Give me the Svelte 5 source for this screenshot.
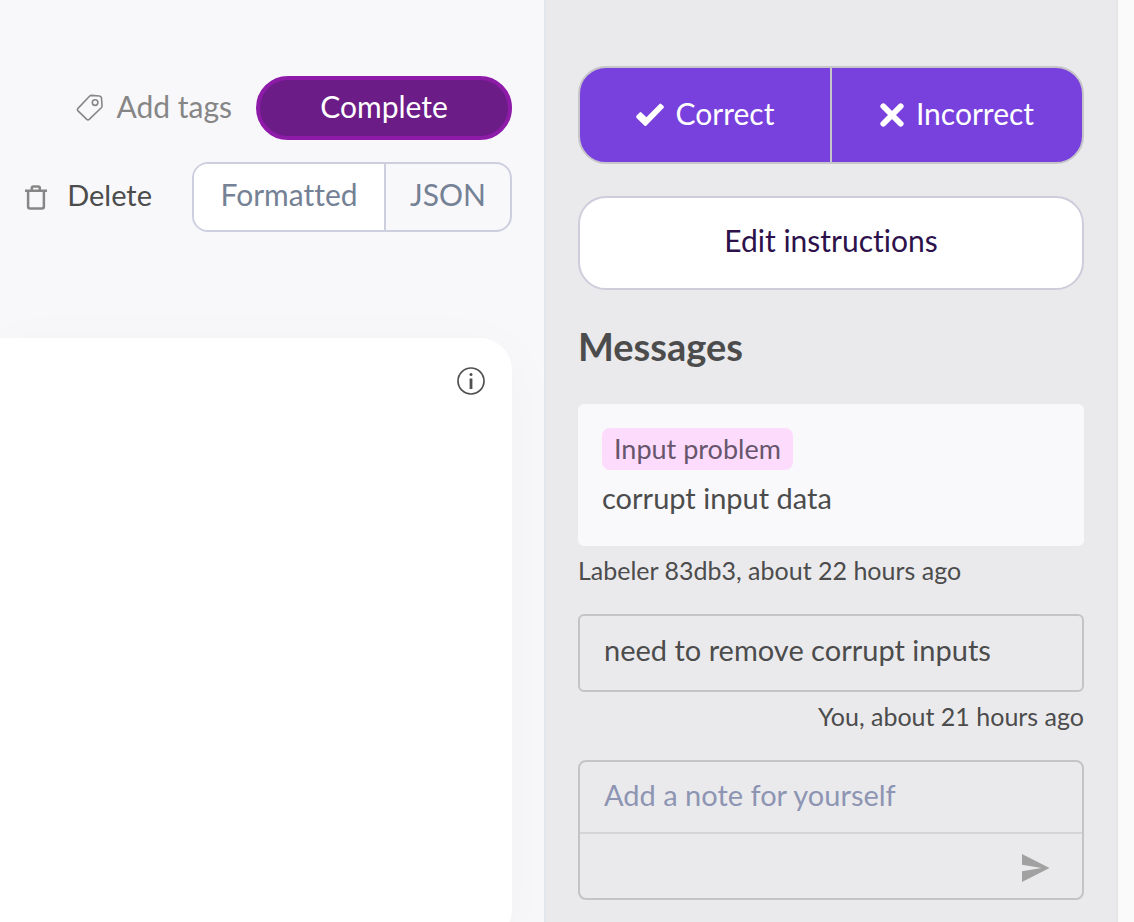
<script lang="ts">
  let view = $state('formatted');
  let note = $state('');
  const views = [
    { id: 'formatted', label: 'Formatted' },
    { id: 'json', label: 'JSON' }
  ];
</script>

<div class="page">
  <main class="workspace">
    <header class="toolbar">
      <div class="row">
        <button class="plain tags">
          <svg width="28" height="28" viewBox="0 0 28 28" fill="none" stroke="currentColor" stroke-width="1.6" aria-hidden="true">
            <path d="M13.5 2.2Q14.3 1.4 15.4 1.4L23.4 2Q25.2 2.2 25.5 4L26 11.8Q26.1 13 25.3 13.8L13.2 25.4Q12 26.5 10.8 25.4L2 16.9Q.8 15.6 2 14.4Z" />
            <circle cx="19.1" cy="8.6" r="2.8" />
          </svg>
          <span>Add tags</span>
        </button>
        <button class="complete">Complete</button>
      </div>
      <div class="row second">
        <button class="plain delete">
          <svg width="22" height="26" viewBox="0 0 22 26" fill="none" stroke="#868686" stroke-width="2.5" aria-hidden="true">
            <path d="M0 6.8H22M6.8 6.5V4.2Q6.8 2.6 8.4 2.6H13.2Q14.8 2.6 14.8 4.2V6.5M3.1 6.8V22.4Q3.1 24.4 5.1 24.4H16.9Q18.9 24.4 18.9 22.4V6.8" />
          </svg>
          <span>Delete</span>
        </button>
        <div class="segments">
          {#each views as item}
            <button class:active={view === item.id} aria-pressed={view === item.id} onclick={() => (view = item.id)}>{item.label}</button>
          {/each}
        </div>
      </div>
    </header>
    <section class="document">
      <button class="plain info" aria-label="Information">
        <svg width="28" height="28" viewBox="0 0 28 28" fill="none" aria-hidden="true">
          <circle cx="14" cy="14" r="13" stroke="#505050" stroke-width="1.7" />
          <circle cx="14" cy="7.5" r="1.5" fill="#505050" />
          <path d="M14 11.5V22" stroke="#505050" stroke-width="2.8" />
        </svg>
      </button>
    </section>
  </main>

  <aside class="review">
    <div class="verdict">
      <button>
        <svg width="28" height="24" viewBox="0 0 28 24" aria-hidden="true">
          <path d="M.6 12.5L3.7 9.4Q4.6 8.6 5.4 9.4L10.4 14.2L23.5.9Q24.4.1 25.3.9L27.5 3.1Q28.4 4 27.5 4.9L10.5 22.6Q9.4 23.6 8.3 22.6L.6 15Q-.4 13.8.6 12.5Z" fill="#fff" />
        </svg>
        <span>Correct</span>
      </button>
      <button>
        <svg width="24" height="24" viewBox="0 0 24 24" aria-hidden="true">
          <path d="M3.3 3.3L20.7 20.7M20.7 3.3L3.3 20.7" stroke="#fff" stroke-width="5.8" stroke-linecap="round" />
        </svg>
        <span>Incorrect</span>
      </button>
    </div>
    <button class="edit">Edit instructions</button>

    <h2>Messages</h2>
    <article>
      <div class="message filled">
        <span class="tag">Input problem</span>
        <p>corrupt input data</p>
      </div>
      <p class="meta">Labeler 83db3, about 22 hours ago</p>
    </article>
    <article>
      <div class="message outlined">
        <p>need to remove corrupt inputs</p>
      </div>
      <p class="meta own">You, about 21 hours ago</p>
    </article>
    <form class="composer" onsubmit={(e) => e.preventDefault()}>
      <input type="text" aria-label="Note" placeholder="Add a note for yourself" bind:value={note} />
      <div class="actions">
        <button class="plain" aria-label="Send">
          <svg width="28" height="28" viewBox="0 0 28 28" aria-hidden="true">
            <path d="M0 0L27.5 14L0 28V17.2L19.5 14L0 10.8Z" fill="#a1a1a2" />
          </svg>
        </button>
      </div>
    </form>
  </aside>
</div>

<style>
  :global(body) {
    background: #fafafa;
  }
  .page {
    display: grid;
    grid-template-columns: minmax(0, 1fr) minmax(0, 574px);
    height: 100vh;
    padding-right: 16px;
    overflow: hidden;
    box-sizing: border-box;
    font: 400 29px/36px Lato, sans-serif;
    font-variant-ligatures: none;
    color: #4c4c4c;
  }
  .page * {
    box-sizing: border-box;
  }
  button,
  input {
    font: inherit;
    font-variant-ligatures: none;
    color: inherit;
    margin: 0;
    padding: 0;
    border: 0;
    background: none;
  }
  button {
    cursor: pointer;
  }
  svg {
    display: block;
    flex: none;
  }
  p,
  h2 {
    margin: 0;
  }
  .plain {
    display: flex;
    align-items: center;
  }
  .workspace {
    background: #f8f8fb;
    padding: 76px 32px 0 0;
    overflow: hidden;
  }
  .toolbar {
    display: flex;
    flex-direction: column;
    gap: 22px;
  }
  .row {
    display: flex;
    justify-content: flex-end;
    align-items: center;
    gap: 24px;
  }
  .second {
    gap: 40px;
  }
  .tags,
  .complete,
  .segments,
  .verdict,
  .edit {
    font-size: 30px;
  }
  .plain span,
  .verdict span {
    padding-bottom: 4px;
  }
  .tags {
    gap: 12px;
    color: #868686;
  }
  .delete {
    gap: 20px;
  }
  .complete {
    width: 256px;
    height: 64px;
    padding-bottom: 4px;
    border: 4px solid #8e1ba8;
    border-radius: 32px;
    background: #6c1c87;
    color: #fff;
  }
  .segments {
    display: flex;
    height: 70px;
    border: 2px solid #cdcfdf;
    border-radius: 16px;
    overflow: hidden;
    color: #758195;
  }
  .segments button {
    width: 124px;
    padding-bottom: 6px;
  }
  .segments button:first-child {
    width: 192px;
    border-right: 2px solid #cdcfdf;
  }
  .segments .active {
    background: #fff;
  }
  .document {
    display: flex;
    justify-content: flex-end;
    align-items: flex-start;
    height: 604px;
    margin-top: 106px;
    padding: 29px 27px;
    border-radius: 0 32px 32px 0;
    background: #fff;
    box-shadow: 0 12px 60px rgba(30, 30, 50, 0.03);
  }
  .review {
    padding: 66px 32px 22px;
    border-left: 2px solid #e1e5ec;
    border-right: 2px solid #e6e6e7;
    background: #eaeaec;
  }
  .verdict {
    display: flex;
    height: 98px;
    border: 2px solid #c6c5c9;
    border-radius: 28px;
    overflow: hidden;
    background: #7841dd;
    color: #fff;
  }
  .verdict button {
    flex: 1;
    display: flex;
    align-items: center;
    justify-content: center;
    gap: 12px;
  }
  .verdict button + button {
    border-left: 2px solid #c6c5c9;
  }
  .edit {
    width: 100%;
    height: 94px;
    margin-top: 32px;
    padding-bottom: 6px;
    border: 2px solid #cdcddb;
    border-radius: 28px;
    background: #fff;
    color: #2d114b;
  }
  h2 {
    margin: 34px 0 36px;
    font-size: 38px;
    line-height: 44px;
    font-weight: 700;
  }
  .message {
    border-radius: 6px;
  }
  .filled {
    height: 142px;
    padding: 24px;
    background: #f9f9fc;
  }
  .tag {
    display: block;
    width: fit-content;
    padding: 0 12px;
    border-radius: 8px;
    background: #fddbfd;
    color: #67566b;
    font-size: 27px;
    line-height: 42px;
  }
  .filled p {
    margin-top: 10px;
  }
  .outlined {
    padding: 16px 24px 22px;
    border: 2px solid #c4c4c6;
  }
  .meta {
    margin: 6px 0 26px;
    font-size: 25px;
  }
  .own {
    text-align: right;
  }
  .composer {
    border: 2px solid #c4c4c6;
    border-radius: 8px;
  }
  .composer input {
    display: block;
    width: 100%;
    height: 72px;
    padding: 0 24px 6px;
    border-bottom: 2px solid #d5d5d7;
  }
  .composer input::placeholder {
    color: #8d95b3;
    opacity: 1;
  }
  .actions {
    display: flex;
    justify-content: flex-end;
    align-items: center;
    height: 64px;
    padding: 4px 32px 0;
  }
</style>
